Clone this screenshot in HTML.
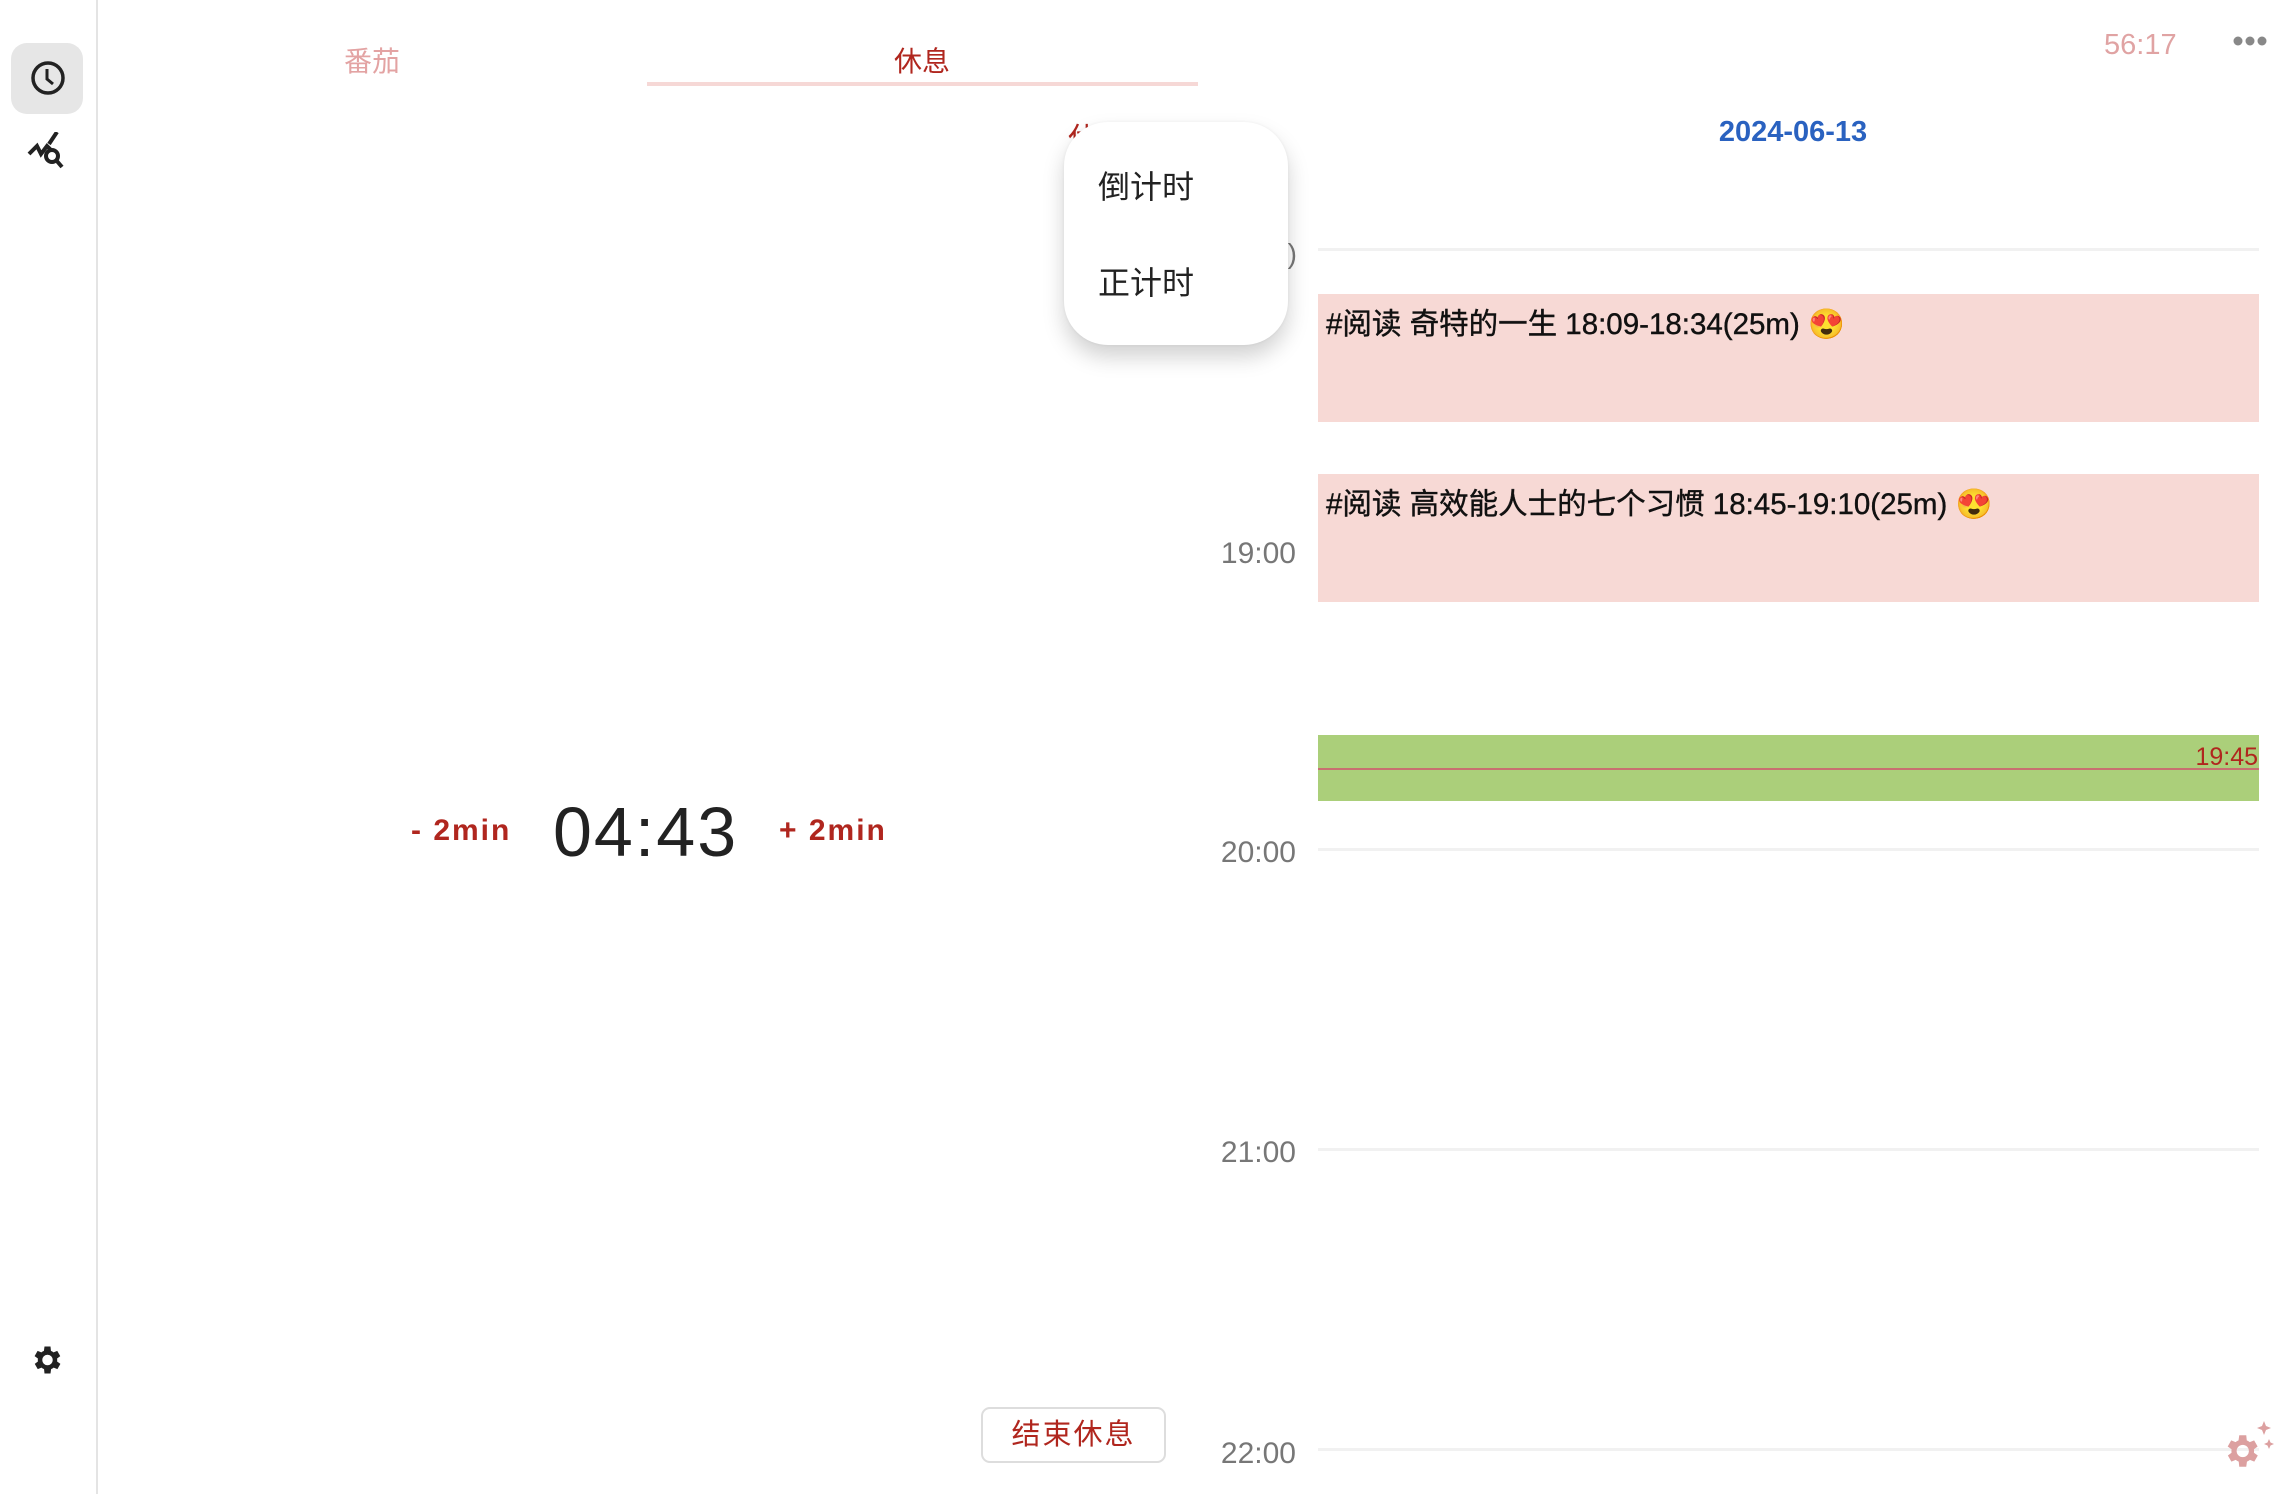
<!DOCTYPE html>
<html><head><meta charset="utf-8">
<style>
*{margin:0;padding:0;box-sizing:border-box}
body{width:2296px;height:1494px;background:#fff;position:relative;overflow:hidden;font-family:"Liberation Sans","Noto Sans CJK SC",sans-serif}
.abs{position:absolute}
.lbl{position:absolute;right:1000px;font-size:30px;color:#777;line-height:1}
.hl{position:absolute;left:1318px;width:941px;height:3px;background:#f1f1f1}
</style></head><body>
<div class="abs" style="left:96px;top:0;width:2px;height:1494px;background:#e4e4e4"></div>
<div class="abs" style="left:11px;top:43px;width:72px;height:71px;border-radius:16px;background:#e6e6e6"></div>
<svg class="abs" style="left:28px;top:58px" width="40" height="40" viewBox="0 0 40 40"><circle cx="20" cy="20" r="15" fill="none" stroke="#222" stroke-width="3.5"/><path d="M19 11v10l6 5" fill="none" stroke="#222" stroke-width="3"/></svg>
<svg class="abs" style="left:27px;top:132px" width="42" height="40" viewBox="0 0 42 40"><path d="M2 22l8-8 4 8 6-8 4 4M22 12l8-12" fill="none" stroke="#222" stroke-width="4"/><circle cx="25" cy="24" r="6" fill="none" stroke="#222" stroke-width="4"/><path d="M29 28l6 7" stroke="#222" stroke-width="4"/></svg>
<svg class="abs" style="left:28px;top:1342px" width="36" height="36" viewBox="0 0 24 24"><path fill="#222" d="M19.4 13a7.5 7.5 0 000-2l2.1-1.6-2-3.5-2.5 1a7.6 7.6 0 00-1.7-1L15 3h-4l-.4 2.9a7.6 7.6 0 00-1.7 1l-2.5-1-2 3.5L6.6 11a7.5 7.5 0 000 2l-2.1 1.6 2 3.5 2.5-1a7.6 7.6 0 001.7 1L11 21h4l.4-2.9a7.6 7.6 0 001.7-1l2.5 1 2-3.5zM13 15.5a3.5 3.5 0 110-7 3.5 3.5 0 010 7z"/></svg>

<div class="abs" style="left:344px;top:48px;font-size:28px;color:#e3a3a3;line-height:1">番茄</div>
<div class="abs" style="left:894px;top:48px;font-size:28px;color:#b0261e;line-height:1">休息</div>
<div class="abs" style="left:647px;top:82px;width:551px;height:4px;background:#f6d8d6"></div>

<div class="abs" style="left:1068px;top:125px;font-size:30px;color:#b0261e;line-height:1">休</div>
<div class="abs" style="left:1272px;top:240px;font-size:28px;color:#777;line-height:1">0)</div>

<div class="abs" style="left:411px;top:816px;font-size:30px;font-weight:bold;color:#b0261e;letter-spacing:2px;line-height:1">- 2min</div>
<div class="abs" style="left:553px;top:797px;font-size:70px;color:#222;letter-spacing:2px;line-height:1">04:43</div>
<div class="abs" style="left:779px;top:816px;font-size:30px;font-weight:bold;color:#b0261e;letter-spacing:2px;line-height:1">+ 2min</div>

<div class="abs" style="left:981px;top:1407px;width:185px;height:56px;border:2px solid #ddd;border-radius:9px;font-size:29px;color:#b0261e;text-align:center;line-height:52px;letter-spacing:2px">结束休息</div>

<div class="abs" style="left:2104px;top:31px;font-size:29px;color:#e0a3a3;line-height:1">56:17</div>
<svg class="abs" style="left:2233px;top:34px" width="34" height="14"><circle cx="5" cy="7" r="4.5" fill="#888"/><circle cx="17" cy="7" r="4.5" fill="#888"/><circle cx="29" cy="7" r="4.5" fill="#888"/></svg>
<div class="abs" style="left:1693px;top:118px;width:200px;text-align:center;font-size:29px;font-weight:bold;color:#2a62c0;line-height:1">2024-06-13</div>

<div class="hl" style="top:248px"></div>
<div class="abs" style="left:1318px;top:294px;width:941px;height:128px;background:#f7d9d5"></div>
<div class="abs" style="left:1326px;top:310px;font-size:29.5px;color:#111;line-height:1;-webkit-text-stroke:0.4px #111">#阅读 奇特的一生 18:09-18:34(25m) 😍</div>
<div class="abs" style="left:1318px;top:474px;width:941px;height:128px;background:#f7d9d5"></div>
<div class="abs" style="left:1326px;top:490px;font-size:29.5px;color:#111;line-height:1;-webkit-text-stroke:0.4px #111">#阅读 高效能人士的七个习惯 18:45-19:10(25m) 😍</div>
<div class="lbl" style="top:539px">19:00</div>

<div class="abs" style="left:1318px;top:735px;width:941px;height:66px;background:#abcf7a"></div>
<div class="abs" style="left:1318px;top:768px;width:941px;height:2px;background:#c87070"></div>
<div class="abs" style="right:38px;top:745px;font-size:25px;color:#b0261e;line-height:1">19:45</div>

<div class="hl" style="top:848px"></div><div class="lbl" style="top:838px">20:00</div>
<div class="hl" style="top:1148px"></div><div class="lbl" style="top:1138px">21:00</div>
<div class="hl" style="top:1448px"></div><div class="lbl" style="top:1439px">22:00</div>

<svg class="abs" style="left:2222px;top:1418px" width="60" height="54" viewBox="0 0 60 54"><g transform="translate(-2,12) scale(1.75)"><path fill="#dca0a0" d="M19.4 13a7.5 7.5 0 000-2l2.1-1.6-2-3.5-2.5 1a7.6 7.6 0 00-1.7-1L15 3h-4l-.4 2.9a7.6 7.6 0 00-1.7 1l-2.5-1-2 3.5L6.6 11a7.5 7.5 0 000 2l-2.1 1.6 2 3.5 2.5-1a7.6 7.6 0 001.7 1L11 21h4l.4-2.9a7.6 7.6 0 001.7-1l2.5 1 2-3.5zM13 15.5a3.5 3.5 0 110-7 3.5 3.5 0 010 7z"/></g><path fill="#dca0a0" d="M42 3l2 5 5 2-5 2-2 5-2-5-5-2 5-2zM47 21l1.5 3.5 3.5 1.5-3.5 1.5-1.5 3.5-1.5-3.5-3.5-1.5 3.5-1.5z"/></svg>

<div class="abs" style="left:1064px;top:122px;width:224px;height:223px;background:#fff;border-radius:44px;box-shadow:0 12px 22px rgba(0,0,0,0.18),0 0 3px rgba(0,0,0,0.06)"></div>
<div class="abs" style="left:1098px;top:171px;font-size:32px;color:#222;line-height:1">倒计时</div>
<div class="abs" style="left:1098px;top:267px;font-size:32px;color:#222;line-height:1">正计时</div>
</body></html>
